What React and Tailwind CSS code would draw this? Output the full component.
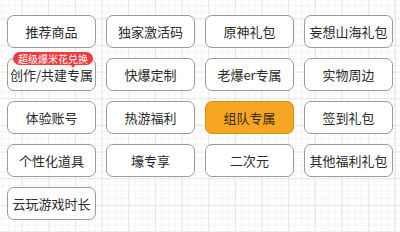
import React from "react";

const items = [
  "推荐商品",
  "独家激活码",
  "原神礼包",
  "妄想山海礼包",
  "创作/共建专属",
  "快爆定制",
  "老爆er专属",
  "实物周边",
  "体验账号",
  "热游福利",
  "组队专属",
  "签到礼包",
  "个性化道具",
  "壕专享",
  "二次元",
  "其他福利礼包",
  "云玩游戏时长",
];

const App = () => {
  return (
    <div
      className="w-[400px] h-[232px] overflow-hidden bg-white bg-[linear-gradient(to_right,#e6e6e6_1px,transparent_1px),linear-gradient(to_bottom,#e6e6e6_1px,transparent_1px),linear-gradient(to_right,#f4f4f4_1px,transparent_1px),linear-gradient(to_bottom,#f4f4f4_1px,transparent_1px)] bg-[size:26.67px_26.67px,26.67px_26.67px,6.67px_6.67px,6.67px_6.67px] bg-[position:21.7px_18.3px,21.7px_18.3px,1.7px_5px,1.7px_5px]"
      style={{ fontFamily: '"Noto Sans CJK SC", "Noto Sans", sans-serif' }}
    >
      <div className="grid grid-cols-[repeat(4,89px)] auto-rows-[33px] gap-x-[10px] gap-y-[10px] pl-[7px] pt-[15px]">
        {items.map((label) => {
          const active = label === "组队专属";
          return (
            <div
              key={label}
              className={`relative flex items-center justify-center rounded-[7px] border text-[13px] leading-none ${
                active
                  ? "bg-[#f6a623] border-[#d98c12] text-[#3a2a10]"
                  : "bg-white border-[#9a9a9a] text-[#2a2a2a]"
              }`}
            >
              {label === "创作/共建专属" && (
                <div className="absolute left-[5px] top-[-7px] h-[13px] w-[80px] rounded-full bg-[#f53a3f] flex items-center justify-center text-[10px] leading-none text-white">
                  超级爆米花兑换
                  <div className="absolute left-[57px] bottom-[-3px] w-0 h-0 border-l-[3px] border-r-[3px] border-t-[4px] border-l-transparent border-r-transparent border-t-[#f53a3f]" />
                </div>
              )}
              <span className="whitespace-nowrap">{label}</span>
            </div>
          );
        })}
      </div>
    </div>
  );
};

export default App;
